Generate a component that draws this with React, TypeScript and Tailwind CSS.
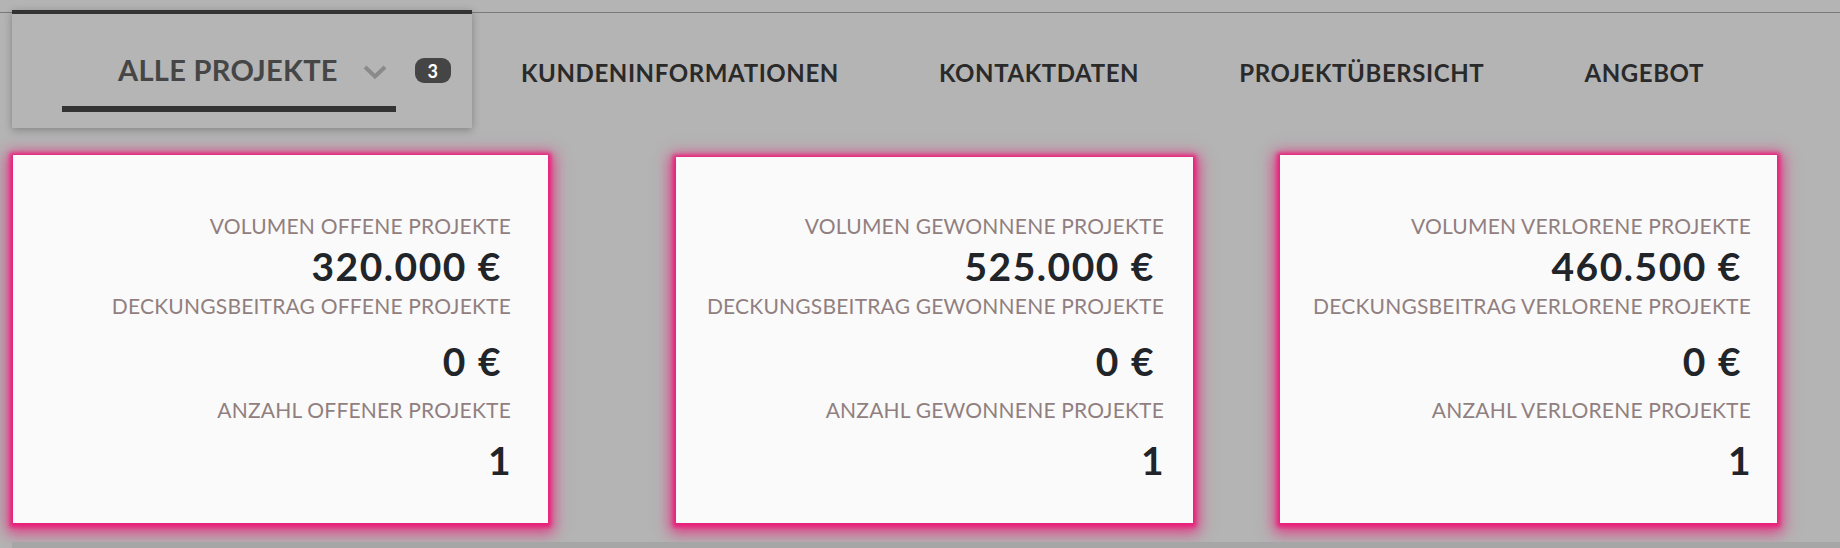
import React from "react";

type Card = {
  w: string;
  pr: string;
  extraTop: string;
  vol: string;
  volLabel: string;
  dbLabel: string;
  countLabel: string;
};

const cards: Card[] = [
  {
    w: "w-[535px]",
    pr: "pr-[37px]",
    extraTop: "mt-0 h-[368px] pt-[60px]",
    vol: "320.000 €",
    volLabel: "VOLUMEN OFFENE PROJEKTE",
    dbLabel: "DECKUNGSBEITRAG OFFENE PROJEKTE",
    countLabel: "ANZAHL OFFENER PROJEKTE",
  },
  {
    w: "w-[517px]",
    pr: "pr-[29px]",
    extraTop: "mt-[2px] h-[366px] pt-[58px]",
    vol: "525.000 €",
    volLabel: "VOLUMEN GEWONNENE PROJEKTE",
    dbLabel: "DECKUNGSBEITRAG GEWONNENE PROJEKTE",
    countLabel: "ANZAHL GEWONNENE PROJEKTE",
  },
  {
    w: "w-[497px]",
    pr: "pr-[26px]",
    extraTop: "mt-0 h-[368px] pt-[60px]",
    vol: "460.500 €",
    volLabel: "VOLUMEN VERLORENE PROJEKTE",
    dbLabel: "DECKUNGSBEITRAG VERLORENE PROJEKTE",
    countLabel: "ANZAHL VERLORENE PROJEKTE",
  },
];

function StatCard({ c }: { c: Card }) {
  return (
    <div
      className={`${c.w} ${c.pr} ${c.extraTop} shrink-0 bg-[#fafafa] flex flex-col items-end text-right shadow-[0_1px_4px_3px_#e9207b,0_4px_14px_6px_rgba(233,32,123,0.8)]`}
    >
      <div className="text-[21px] leading-none tracking-[0.2px] text-[#917f80] whitespace-nowrap">
        {c.volLabel}
      </div>
      <div className="mt-[11px] mr-[9px] text-[39px] leading-none tracking-[1.5px] font-bold text-[#212529] whitespace-nowrap">
        {c.vol}
      </div>
      <div className="mt-[9px] text-[21px] leading-none tracking-[0.2px] text-[#917f80] whitespace-nowrap">
        {c.dbLabel}
      </div>
      <div className="mt-[26px] mr-[9px] text-[39px] leading-none tracking-[1.5px] font-bold text-[#212529] whitespace-nowrap">
        0 €
      </div>
      <div className="mt-[18px] text-[21px] leading-none tracking-[0.2px] text-[#917f80] whitespace-nowrap">
        {c.countLabel}
      </div>
      <div className="mt-[21px] -mr-[1px] text-[39px] leading-none tracking-[1.5px] font-bold text-[#212529]">
        1
      </div>
    </div>
  );
}

export default function App() {
  const nav = ["KUNDENINFORMATIONEN", "KONTAKTDATEN", "PROJEKTÜBERSICHT", "ANGEBOT"];
  return (
    <div className="w-[1840px] h-[548px] overflow-hidden bg-[#b4b4b4] font-['Lato',sans-serif] flex flex-col">
      {/* header / tabs */}
      <div className="mt-[12px] border-t border-[#7a7a7a] flex items-start">
        <div className="ml-[12px] -mt-[3px] w-[460px] h-[118px] border-t-4 border-[#333333] bg-[#b5b5b5] shadow-[0_2px_8px_rgba(0,0,0,0.28)] flex flex-col shrink-0">
          <div className="flex items-start pl-[106px] pt-[41px]">
            <span className="text-[29px] leading-none tracking-[0.3px] font-bold text-[#464646] whitespace-nowrap">
              ALLE PROJEKTE
            </span>
            <svg
              className="ml-[25px] mt-[10px]"
              width="24"
              height="14"
              viewBox="0 0 24 14"
              fill="none"
            >
              <path d="M2 2 L12 11.5 L22 2" stroke="#8a8a8a" strokeWidth="4" />
            </svg>
            <span className="ml-[28px] mt-[3px] w-[36px] h-[25px] rounded-[9px] bg-[#454545] text-white text-[18px] font-bold leading-none flex items-center justify-center">
              3
            </span>
          </div>
          <div className="ml-[50px] mt-[22px] w-[334px] h-[6px] bg-[#333333]" />
        </div>
        <div className="flex ml-[-1px]">
          {nav.map((n) => (
            <div
              key={n}
              className="px-[50px] mt-[48px] text-[24px] leading-none tracking-[0.6px] font-bold text-[#2a2a2a] whitespace-nowrap"
            >
              {n}
            </div>
          ))}
        </div>
      </div>

      {/* cards */}
      <div className="flex items-start mt-[27px] pl-[13px]">
        <StatCard c={cards[0]} />
        <div className="w-[128px] shrink-0" />
        <StatCard c={cards[1]} />
        <div className="w-[87px] shrink-0" />
        <StatCard c={cards[2]} />
      </div>

      {/* next section strip */}
      <div className="ml-[12px] mt-[19px] flex-1 bg-[#a6a6a6]" />
    </div>
  );
}
